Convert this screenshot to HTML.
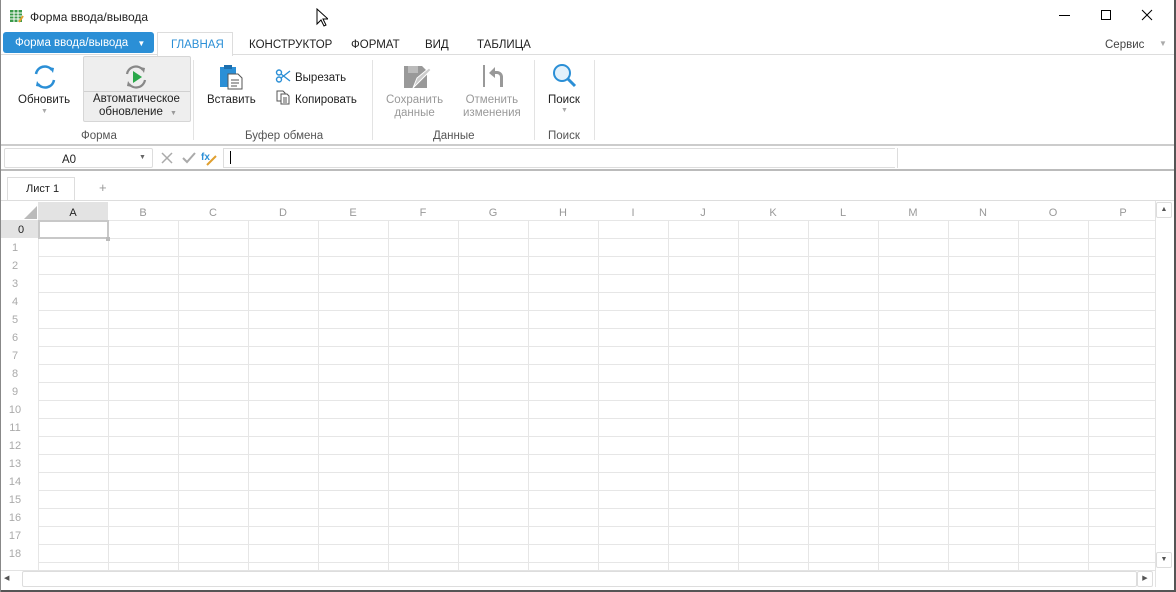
<!DOCTYPE html>
<html><head><meta charset="utf-8"><style>
*{margin:0;padding:0;box-sizing:border-box}
body{width:1176px;height:592px;position:relative;overflow:hidden;background:#fff;font-family:"Liberation Sans","DejaVu Sans",sans-serif;font-size:12px;color:#222}
.a{position:absolute}
.t{white-space:nowrap}
.tab{position:absolute;top:39px;font-size:11.5px;color:#222}
.lbl{position:absolute;font-size:11.5px;text-align:center;white-space:nowrap;line-height:13px}
.grp{position:absolute;top:130px;font-size:11.5px;color:#555;text-align:center}
.sep{position:absolute;top:60px;width:1px;height:80px;background:#e3e3e3}
.ch{position:absolute;top:207px;font-size:11px;color:#999;width:70px;text-align:center}
.rh{position:absolute;left:0;width:30px;text-align:center;font-size:11px;color:#aaa}
</style></head><body>
<div class="a" style="right:0;top:0;width:2px;height:592px;background:#555"></div>
<div class="a" style="left:0;bottom:0;width:1176px;height:2px;background:#555"></div>
<div class="a" style="left:0;top:0;width:1px;height:592px;background:#888"></div>
<svg class="a" style="left:10px;top:9px" width="14" height="14"><rect x="0" y="1" width="12" height="12" fill="#3a9a4a"/><path d="M0 4h12M0 7h12M0 10h12M4 1v12M8 1v12" stroke="#fff" stroke-width="1"/><path d="M9 13l4-6" stroke="#e0a030" stroke-width="2"/></svg>
<div class="a t" style="left:30px;top:10px;font-size:12px">Форма ввода/вывода</div>
<svg class="a" style="left:316px;top:8px" width="12" height="19"><path d="M1 1v15l4-4 3 6 2-1-3-6h5z" fill="#fff" stroke="#000"/></svg>
<div class="a" style="left:1059px;top:15px;width:11px;height:1px;background:#000"></div>
<div class="a" style="left:1101px;top:10px;width:10px;height:10px;border:1px solid #000"></div>
<svg class="a" style="left:1141px;top:9px" width="12" height="12"><path d="M1 1l10 10M11 1L1 11" stroke="#000"/></svg>
<div class="a t" style="left:3px;top:32px;width:151px;height:21px;background:#2b8fd6;border-radius:3px;color:#fff;font-size:11.5px;padding:5px 0 0 12px">Форма ввода/вывода <span style="font-size:8px;margin-left:6px">▼</span></div>
<div class="a" style="left:157px;top:32px;width:76px;height:24px;border:1px solid #ddd;border-bottom:none;background:#fff"></div>
<div class="tab" style="left:171px;color:#2b8fd6">ГЛАВНАЯ</div>
<div class="tab" style="left:249px">КОНСТРУКТОР</div>
<div class="tab" style="left:351px">ФОРМАТ</div>
<div class="tab" style="left:425px">ВИД</div>
<div class="tab" style="left:477px">ТАБЛИЦА</div>
<div class="tab" style="left:1105px;color:#444">Сервис</div>
<div class="a" style="left:1159px;top:39px;font-size:8px;color:#aaa">▼</div>
<div class="a" style="left:1px;top:54px;width:1173px;height:1px;background:#ddd"></div>
<div class="a" style="left:158px;top:54px;width:74px;height:1px;background:#fff"></div>
<svg class="a" style="left:31px;top:63px" width="28" height="28"><path d="M5 11a9 9 0 0 1 16-4" fill="none" stroke="#2b8fd6" stroke-width="2.5"/><path d="M18 4l5 1-1 5z" fill="#2b8fd6"/><path d="M23 17a9 9 0 0 1-16 4" fill="none" stroke="#2b8fd6" stroke-width="2.5"/><path d="M10 24l-5-1 1-5z" fill="#2b8fd6"/></svg>
<div class="lbl" style="left:18px;top:94px">Обновить</div>
<div class="a" style="left:41px;top:108px;font-size:7px;color:#aaa">▼</div>
<div class="a" style="left:83px;top:56px;width:108px;height:66px;background:#eee;border:1px solid #d6d6d6;border-radius:2px"></div>
<div class="a" style="left:84px;top:91px;width:106px;height:1px;background:#d0d0d0"></div>
<svg class="a" style="left:122px;top:63px" width="28" height="28"><path d="M5 11a9 9 0 0 1 16-4" fill="none" stroke="#888" stroke-width="2.2"/><path d="M18 4l5 1-1 5z" fill="#888"/><path d="M23 17a9 9 0 0 1-16 4" fill="none" stroke="#888" stroke-width="2.2"/><path d="M10 24l-5-1 1-5z" fill="#888"/><path d="M11 8l9 6-9 6z" fill="#2aa84a"/></svg>
<div class="lbl" style="left:93px;top:93px">Автоматическое</div>
<div class="lbl" style="left:99px;top:106px">обновление <span style="font-size:7px;color:#999;margin-left:4px">▼</span></div>
<div class="grp" style="left:81px">Форма</div>
<div class="sep" style="left:193px"></div>
<svg class="a" style="left:219px;top:64px" width="24" height="26"><rect x="1" y="3" width="16" height="20" fill="#2b8fd6"/><rect x="5" y="1" width="8" height="4" fill="#1d6fae"/><path d="M9 10h10l4 4v11H9z" fill="#fff" stroke="#555"/><path d="M12 16h8M12 19h8M12 22h6" stroke="#555"/></svg>
<div class="lbl" style="left:207px;top:94px">Вставить</div>
<svg class="a" style="left:275px;top:69px" width="16" height="14"><circle cx="4" cy="3.5" r="2.5" fill="none" stroke="#2b8fd6" stroke-width="1.4"/><circle cx="4" cy="10.5" r="2.5" fill="none" stroke="#2b8fd6" stroke-width="1.4"/><path d="M6 5l9 7M6 9l9-7" stroke="#2b8fd6" stroke-width="1.4"/></svg>
<div class="lbl" style="left:295px;top:72px">Вырезать</div>
<svg class="a" style="left:276px;top:90px" width="14" height="15"><path d="M1 1h6l2 2v8H1z" fill="#fff" stroke="#555"/><path d="M5 4h6l2 2v8H5z" fill="#fff" stroke="#555"/><path d="M7 8h4M7 10h4M7 12h4" stroke="#555"/></svg>
<div class="lbl" style="left:295px;top:94px">Копировать</div>
<div class="grp" style="left:245px">Буфер обмена</div>
<div class="sep" style="left:372px"></div>
<svg class="a" style="left:403px;top:64px" width="28" height="28"><path d="M1 2h18l5 5v17H1z" fill="#999"/><rect x="5" y="2" width="10" height="7" fill="#bbb"/><path d="M10 24l4-10 12-10 2 2-12 12z" fill="#ccc" stroke="#fff" stroke-width="1"/></svg>
<div class="lbl" style="left:386px;top:94px;color:#999">Сохранить<br>данные</div>
<svg class="a" style="left:482px;top:64px" width="24" height="26"><path d="M2 1v22" stroke="#999" stroke-width="2"/><path d="M7 9l6-6v4h2a6 6 0 0 1 6 6v10h-3V13a3 3 0 0 0-3-3h-2v4z" fill="#999"/></svg>
<div class="lbl" style="left:463px;top:94px;color:#999">Отменить<br>изменения</div>
<div class="grp" style="left:433px">Данные</div>
<div class="sep" style="left:534px"></div>
<svg class="a" style="left:551px;top:63px" width="26" height="26"><circle cx="11" cy="10" r="8" fill="#e3f1fb" stroke="#2b8fd6" stroke-width="2"/><path d="M17 16l7 7" stroke="#2b8fd6" stroke-width="3"/></svg>
<div class="lbl" style="left:548px;top:94px;color:#222">Поиск</div>
<div class="a" style="left:561px;top:107px;font-size:7px;color:#aaa">▼</div>
<div class="grp" style="left:548px">Поиск</div>
<div class="sep" style="left:594px"></div>
<div class="a" style="left:1px;top:144px;width:1173px;height:2px;background:#ccc"></div>
<div class="a" style="left:4px;top:148px;width:149px;height:20px;border:1px solid #ddd;border-radius:2px"></div>
<div class="a t" style="left:62px;top:154px;font-size:11.5px">A0</div>
<div class="a" style="left:139px;top:154px;font-size:7px;color:#666">▼</div>
<svg class="a" style="left:161px;top:152px" width="12" height="12"><path d="M1 1l10 10M11 1L1 11" stroke="#aaa" stroke-width="1.5"/></svg>
<svg class="a" style="left:182px;top:152px" width="14" height="12"><path d="M1 6l4 4 8-9" fill="none" stroke="#aaa" stroke-width="2"/></svg>
<svg class="a" style="left:201px;top:150px" width="17" height="16"><text x="0" y="10" font-size="10" font-family="Liberation Sans" fill="#2b8fd6" font-weight="bold">fx</text><path d="M6 15l9-9" stroke="#e0a030" stroke-width="2"/></svg>
<div class="a" style="left:223px;top:148px;width:672px;height:20px;border:1px solid #ddd;border-right:none"></div>
<div class="a" style="left:230px;top:151px;width:1px;height:13px;background:#000"></div>
<div class="a" style="left:897px;top:148px;width:1px;height:20px;background:#ddd"></div>
<div class="a" style="left:1px;top:169px;width:1173px;height:2px;background:#bbb"></div>
<div class="a" style="left:7px;top:177px;width:68px;height:24px;border:1px solid #ddd;border-bottom:none;background:#fff"></div>
<div class="a t" style="left:26px;top:183px;font-size:11px">Лист 1</div>
<div class="a" style="left:99px;top:180px;font-size:13px;color:#999">+</div>
<div class="a" style="left:1px;top:200px;width:1173px;height:1px;background:#ddd"></div>
<div class="a" style="left:38px;top:220px;width:1117px;height:350px;background-image:linear-gradient(to right,#e6e6e6 1px,transparent 1px),linear-gradient(to bottom,#e6e6e6 1px,transparent 1px);background-size:70px 18px;background-position:70px 0,0 18px"></div>
<div class="a" style="left:38px;top:202px;width:70px;height:18px;background:#e3e3e3"></div>
<div class="a" style="left:1px;top:220px;width:37px;height:18px;background:#e3e3e3"></div>
<svg class="a" style="left:24px;top:206px" width="13" height="13"><path d="M13 0v13H0z" fill="#bbb"/></svg>
<div class="ch" style="left:38px;color:#222">A</div><div class="ch" style="left:108px">B</div><div class="ch" style="left:178px">C</div><div class="ch" style="left:248px">D</div><div class="ch" style="left:318px">E</div><div class="ch" style="left:388px">F</div><div class="ch" style="left:458px">G</div><div class="ch" style="left:528px">H</div><div class="ch" style="left:598px">I</div><div class="ch" style="left:668px">J</div><div class="ch" style="left:738px">K</div><div class="ch" style="left:808px">L</div><div class="ch" style="left:878px">M</div><div class="ch" style="left:948px">N</div><div class="ch" style="left:1018px">O</div><div class="ch" style="left:1088px">P</div>
<div class="rh" style="top:224px;color:#222;left:6px;width:30px">0</div>
<div class="rh" style="top:242px">1</div><div class="rh" style="top:260px">2</div><div class="rh" style="top:278px">3</div><div class="rh" style="top:296px">4</div><div class="rh" style="top:314px">5</div><div class="rh" style="top:332px">6</div><div class="rh" style="top:350px">7</div><div class="rh" style="top:368px">8</div><div class="rh" style="top:386px">9</div><div class="rh" style="top:404px">10</div><div class="rh" style="top:422px">11</div><div class="rh" style="top:440px">12</div><div class="rh" style="top:458px">13</div><div class="rh" style="top:476px">14</div><div class="rh" style="top:494px">15</div><div class="rh" style="top:512px">16</div><div class="rh" style="top:530px">17</div><div class="rh" style="top:548px">18</div>
<div class="a" style="left:38px;top:220px;width:71px;height:19px;border:2px solid #c8c8c8"></div>
<div class="a" style="left:106px;top:237px;width:4px;height:4px;background:#bbb"></div>
<div class="a" style="left:1155px;top:201px;width:19px;height:386px;background:#fff;border-left:1px solid #e3e3e3"></div>
<div class="a" style="left:1156px;top:202px;width:16px;height:16px;border:1px solid #ddd;border-radius:2px;font-size:7px;color:#555;text-align:center;line-height:14px">▲</div>
<div class="a" style="left:1156px;top:552px;width:16px;height:16px;border:1px solid #ddd;border-radius:2px;font-size:7px;color:#555;text-align:center;line-height:14px">▼</div>
<div class="a" style="left:1px;top:570px;width:1154px;height:18px;background:#fff;border-top:1px solid #e3e3e3"></div>
<div class="a" style="left:4px;top:572px;width:18px;height:15px;font-size:7px;color:#555;line-height:14px">◀</div>
<div class="a" style="left:22px;top:571px;width:1115px;height:16px;border:1px solid #ddd;border-radius:2px"></div>
<div class="a" style="left:1137px;top:571px;width:16px;height:16px;border:1px solid #ddd;border-radius:2px;font-size:7px;color:#555;text-align:center;line-height:14px">▶</div>
</body></html>
